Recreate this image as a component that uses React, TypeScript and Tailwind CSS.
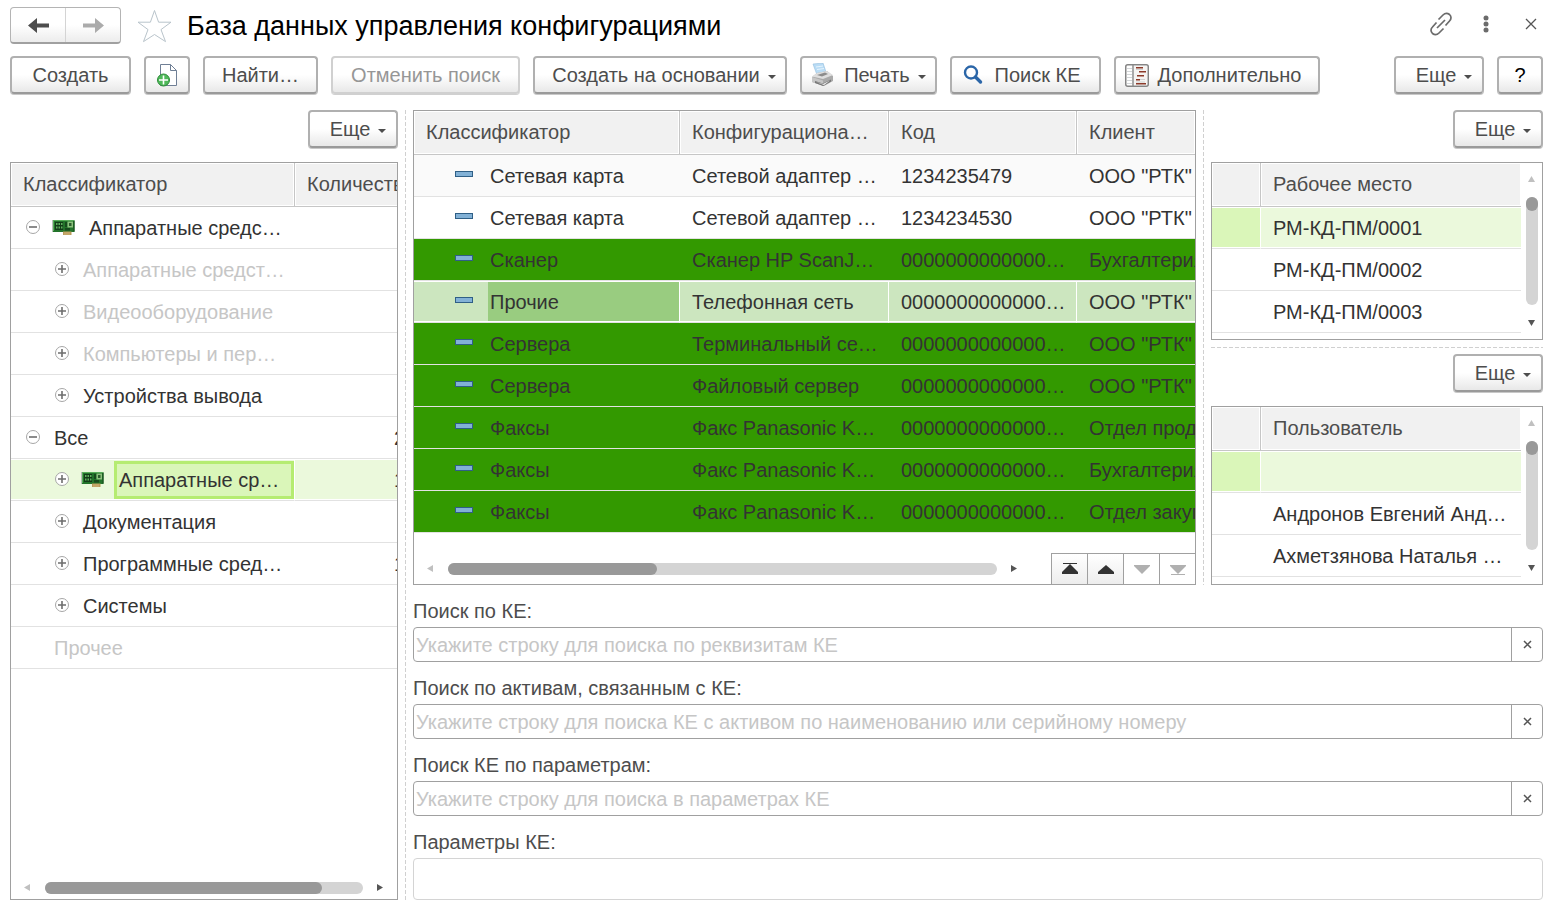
import type { ReactNode } from "react";
import clsx from "clsx";

type TreeRow = {
  title: string;
  level: number;
  state?: "open" | "closed";
  board?: boolean;
  muted?: boolean;
  selected?: boolean;
  count?: string;
};

type Item = {
  kind: string;
  name: string;
  code: string;
  client: string;
  look: "light" | "plain" | "green" | "selected";
};

const treeRows: TreeRow[] = [
  { title: "Аппаратные средс…", level: 0, state: "open", board: true },
  { title: "Аппаратные средст…", level: 1, state: "closed", muted: true },
  { title: "Видеооборудование", level: 1, state: "closed", muted: true },
  { title: "Компьютеры и пер…", level: 1, state: "closed", muted: true },
  { title: "Устройства вывода", level: 1, state: "closed" },
  { title: "Все", level: 0, state: "open", count: "2" },
  {
    title: "Аппаратные ср…",
    level: 1,
    state: "closed",
    board: true,
    selected: true,
    count: "1",
  },
  { title: "Документация", level: 1, state: "closed" },
  { title: "Программные сред…", level: 1, state: "closed", count: "1" },
  { title: "Системы", level: 1, state: "closed" },
  { title: "Прочее", level: 0, muted: true },
];

const zeros = "0000000000000…";

const items: Item[] = [
  { kind: "Сетевая карта", name: "Сетевой адаптер …", code: "1234235479", client: 'ООО "РТК"', look: "light" },
  { kind: "Сетевая карта", name: "Сетевой адаптер …", code: "1234234530", client: 'ООО "РТК"', look: "plain" },
  { kind: "Сканер", name: "Сканер HP ScanJ…", code: zeros, client: "Бухгалтерия", look: "green" },
  { kind: "Прочие", name: "Телефонная сеть", code: zeros, client: 'ООО "РТК"', look: "selected" },
  { kind: "Сервера", name: "Терминальный се…", code: zeros, client: 'ООО "РТК"', look: "green" },
  { kind: "Сервера", name: "Файловый сервер", code: zeros, client: 'ООО "РТК"', look: "green" },
  { kind: "Факсы", name: "Факс Panasonic K…", code: zeros, client: "Отдел продаж", look: "green" },
  { kind: "Факсы", name: "Факс Panasonic K…", code: zeros, client: "Бухгалтерия", look: "green" },
  { kind: "Факсы", name: "Факс Panasonic K…", code: zeros, client: "Отдел закупок", look: "green" },
];

const fields = [
  { id: "ke", label: "Поиск по КЕ:", hint: "Укажите строку для поиска по реквизитам КЕ" },
  {
    id: "assets",
    label: "Поиск по активам, связанным с КЕ:",
    hint: "Укажите строку для поиска КЕ с активом по наименованию или серийному номеру",
  },
  { id: "params", label: "Поиск КЕ по параметрам:", hint: "Укажите строку для поиска в параметрах КЕ" },
];

function Button({
  children,
  className,
  disabled,
  label,
}: {
  children: ReactNode;
  className?: string;
  disabled?: boolean;
  label?: string;
}) {
  return (
    <button
      type="button"
      disabled={disabled}
      aria-label={label}
      className={clsx(
        "flex h-[38px] shrink-0 items-center justify-center whitespace-nowrap rounded-[4px] border-2 bg-linear-to-b from-white from-50% to-[#e8e8e8]",
        disabled
          ? "border-[#d0d0d0] text-[#969696] shadow-[0_1px_0_#d0d0d0]"
          : "border-[#b0b0b0] border-b-[#9a9a9a] text-[#4d4d4d] shadow-[0_1px_0_#c8c8c8]",
        className,
      )}
    >
      {children}
    </button>
  );
}

function Caret() {
  return (
    <svg width="8" height="4" viewBox="0 0 8 4" className="mt-1 ml-2 shrink-0">
      <path d="M0 0h8L4 4z" fill="#4d4d4d" />
    </svg>
  );
}

function MoreButton() {
  return (
    <Button className="w-[90px] pl-[10px]">
      Еще
      <Caret />
    </Button>
  );
}

function Head({ children, className }: { children?: ReactNode; className?: string }) {
  return (
    <th
      className={clsx(
        "h-11 overflow-hidden border-r border-b border-[#c6c6c6] bg-[#f1f1f1] px-3 pb-[2px] text-left font-normal text-[#4d4d4d] shadow-[inset_0_0_0_1px_#fff] last:border-r-0",
        className,
      )}
    >
      {children}
    </th>
  );
}

function Arrow({ dir, dim }: { dir: "left" | "right" | "up" | "down"; dim?: boolean }) {
  const paths = {
    left: "M7 1v7L1 4.5z",
    right: "M1 1v7l6-3.5z",
    up: "M1 7h7L4.5 1z",
    down: "M1 2h7L4.5 8z",
  };
  return (
    <svg width="9" height="9" viewBox="0 0 9 9" className="shrink-0">
      <path d={paths[dir]} fill={dim ? "#c0c0c0" : "#555"} />
    </svg>
  );
}

function Toggle({ open }: { open: boolean }) {
  return (
    <svg width="14" height="14" viewBox="0 0 14 14" className="mb-[2px] shrink-0">
      <circle cx="7" cy="7" r="6.5" fill="#fff" stroke="#a6a6a6" />
      <path d={open ? "M3 7h8" : "M3 7h8M7 3v8"} stroke="#6e6e6e" strokeWidth="1.6" />
    </svg>
  );
}

function BoardIcon() {
  return (
    <svg width="23" height="17" viewBox="0 0 23 17" className="shrink-0">
      <path d="M0 1h1.5v12H0z" fill="#b9bdb9" />
      <path d="M1 1h21.500v12H1z" fill="#22732a" />
      <path d="M1 1h21v1H1zM1 1h1v11H1z" fill="#58ac59" />
      <path d="M11 12.500h8.500V16H11z" fill="#b99a5b" />
      <path d="M13 13v3M15 13v3M17 13v3" stroke="#ddc58a" strokeWidth=".6" />
      <path d="M3 3h8v8H3z" fill="#123c18" />
      <path d="M4 4h1.500v2H4zM6.500 4H8v2H6.500zM9 4h1.500v2H9zM4 7.500h1.500v2H4zM6.500 7.500H8v2H6.500zM9 7.500h1.500v2H9z" fill="#5fae5c" />
      <path d="M13 3h2v5h-2zM13 9h5v2.500h-5z" fill="#174a1d" />
      <path d="M15.500 2.500h5.500v6h-5.500z" fill="#8bc17c" />
      <path d="M17 4h2.500v3H17z" fill="#2c5c2e" />
      <path d="M22 2v10.500" stroke="#174a1d" />
    </svg>
  );
}

function PrinterIcon() {
  return (
    <svg width="23" height="24" viewBox="0 0 23 24" className="shrink-0">
      <path d="M2 1l10-1 3 9-9 3z" fill="#b9dcf5" stroke="#94bedd" strokeWidth=".6" />
      <path d="M5 4l7-1M6 6.500l7-1" stroke="#e6f4fd" />
      <path d="M1 14l5-4 10-2 6 5v5l-9 5-12-4z" fill="#a9a9a9" />
      <path d="M1 13.500l5-3.500 10-2 6 4-10 4z" fill="#dedede" />
      <path d="M6 12l8-2.500 3 1.500-6 2.500z" fill="#8c8c8c" />
      <path d="M1 14l11 3.500v5L1 19z" fill="#c6c6c6" />
      <path d="M4 18l8 2.500 8-4v2l-8 4.500-8-3z" fill="#777" />
      <path d="M5 19l7 2 7-3.500-6 4.500z" fill="#f5f5f5" />
    </svg>
  );
}

function SearchIcon() {
  return (
    <svg width="20" height="20" viewBox="0 0 20 20" className="shrink-0">
      <circle cx="8" cy="7.500" r="6" fill="none" stroke="#2b66a8" strokeWidth="2.400" />
      <path d="M12.500 12l5 5" stroke="#2b66a8" strokeWidth="3.400" strokeLinecap="round" />
    </svg>
  );
}

function ReportIcon() {
  return (
    <svg width="24" height="23" viewBox="0 0 24 23" className="shrink-0">
      <rect x=".75" y=".75" width="22.500" height="21.500" rx="2" fill="#fff" stroke="#858585" strokeWidth="1.500" />
      <path d="M2 4.500h5M2 7.500h5M2 10.500h5M2 13.500h5M2 16.500h5M2 19.500h5" stroke="#d3d6d8" />
      <path d="M8 1v21" stroke="#8d8d8d" strokeWidth="1.500" />
      <path d="M9 2h13v19H9z" fill="#f6f4f2" />
      <path d="M11 5.500h7M13 15.500h7M11 18h9" stroke="#cfd2d2" />
      <path d="M11 3.750h7M14 7.750h7M12 11.750h7M11 15.750h4M11 19.750h10" stroke="#8c3a2a" strokeWidth="1.700" />
    </svg>
  );
}

function AddPageIcon() {
  return (
    <svg width="20" height="24" viewBox="0 0 20 24" className="shrink-0">
      <path d="M3.500 1.500h10l6 6v15h-16z" fill="#fff" stroke="#6f7f95" />
      <path d="M13.500 1.500v6h6" fill="none" stroke="#6f7f95" />
      <circle cx="6.500" cy="17" r="6" fill="#4fb95a" stroke="#2b8a37" />
      <path d="M6.500 12.500v9M2 17h9" stroke="#fff" strokeWidth="1.600" />
    </svg>
  );
}

function NavArrow({ back }: { back?: boolean }) {
  return (
    <svg width="21" height="15" viewBox="0 0 21 15">
      {back ? (
        <path d="M0 7.500L9 0v5.500h12v4H9V15z" fill="#4d4d4d" />
      ) : (
        <path d="M21 7.500L12 0v5.500H0v4h12V15z" fill="#ababab" />
      )}
    </svg>
  );
}

function TitleBar() {
  return (
    <header className="flex h-[37px] items-center">
      <div className="flex h-full w-[111px] rounded-[4px] border border-[#b4b4b4] border-b-2 border-b-[#a0a0a0] bg-linear-to-b from-white from-50% to-[#ececec]">
        <button type="button" aria-label="Назад" className="flex flex-1 items-center justify-center border-r border-[#d4d4d4]">
          <NavArrow back />
        </button>
        <button type="button" aria-label="Вперед" className="flex flex-1 items-center justify-center">
          <NavArrow />
        </button>
      </div>
      <button type="button" aria-label="Избранное" className="ml-4">
        <svg width="35" height="34" viewBox="0 0 35 34" fill="none" stroke="#b9c4cb">
          <path d="M17.500 1.500l4.100 11.700h12.400l-10 7.400 4.500 12L17.500 25.500l-11 7.100 4.500-12-10-7.400h12.400z" />
        </svg>
      </button>
      <h1 className="ml-[15px] text-[27px] leading-8 text-black">База данных управления конфигурациями</h1>
      <div className="ml-auto flex items-center pb-1">
        <button type="button" aria-label="Ссылка">
          <svg width="24" height="24" viewBox="0 0 24 24" fill="none" stroke="#6b6b6b" strokeWidth="1.700">
            <path d="M8 16l8-8" />
            <path d="M9.500 7.500l4.500-4.500c2-2 4.500-2 6.500-.5 2 2 2 4.500 0 6.500l-4 4.500" />
            <path d="M14.500 16.500L10 21c-2 2-4.500 2-6.500.5-2-2-2-4.500 0-6.500l4-4.500" />
          </svg>
        </button>
        <button type="button" aria-label="Меню" className="ml-[30px]">
          <svg width="6" height="18" viewBox="0 0 6 18" fill="#6b6b6b">
            <circle cx="3" cy="3" r="2.500" />
            <circle cx="3" cy="9" r="2.500" />
            <circle cx="3" cy="15" r="2.500" />
          </svg>
        </button>
        <button type="button" aria-label="Закрыть" className="ml-9 mr-[6px]">
          <svg width="12" height="12" viewBox="0 0 12 12" stroke="#555" strokeWidth="1.300">
            <path d="M1 1l10 10M11 1L1 11" />
          </svg>
        </button>
      </div>
    </header>
  );
}

function Toolbar() {
  return (
    <div className="mt-3 flex gap-[13px]">
      <Button className="w-[121px]">Создать</Button>
      <Button className="w-[46px]" label="Скопировать">
        <AddPageIcon />
      </Button>
      <Button className="w-[115px]">Найти…</Button>
      <Button className="w-[189px]" disabled>
        Отменить поиск
      </Button>
      <Button className="w-[254px] pl-2">
        Создать на основании
        <Caret />
      </Button>
      <Button className="w-[137px]">
        <PrinterIcon />
        <span className="ml-[10px]">Печать</span>
        <Caret />
      </Button>
      <Button className="w-[151px] pr-2">
        <SearchIcon />
        <span className="ml-3">Поиск КЕ</span>
      </Button>
      <Button className="w-[206px] pr-2">
        <ReportIcon />
        <span className="ml-[9px]">Дополнительно</span>
      </Button>
      <div className="ml-auto flex gap-[13px]">
        <MoreButton />
        <Button className="w-[46px] text-black">?</Button>
      </div>
    </div>
  );
}

function HScroll({ thumb }: { thumb: string }) {
  return (
    <div className="flex flex-1 items-center">
      <Arrow dir="left" dim />
      <div className="mx-[13px] h-3 flex-1 rounded-full bg-[#d4d4d4]">
        <div className={clsx("h-3 rounded-full bg-[#999]", thumb)} />
      </div>
      <Arrow dir="right" />
    </div>
  );
}

function Tree() {
  return (
    <aside className="flex w-[388px] shrink-0 flex-col">
      <div className="flex justify-end">
        <MoreButton />
      </div>
      <div className="mt-[14px] flex flex-1 flex-col overflow-hidden border border-[#a0a0a0]">
        <table className="w-[412px] table-fixed border-separate border-spacing-0 whitespace-nowrap">
          <thead>
            <tr>
              <Head className="w-[284px]">Классификатор</Head>
              <Head>Количество</Head>
            </tr>
          </thead>
          <tbody>
            {treeRows.map((row, i) => (
              <tr key={i} className={clsx(row.selected && "bg-[#ebf9dc]", row.muted ? "text-[#c6c6c6]" : "text-[#333]")}>
                <td
                  className={clsx(
                    "h-[42px] border-b border-[#e2e2e2] p-0",
                    row.selected && "border-r border-r-white shadow-[inset_0_1px_0_#fff,inset_0_-1px_0_#fff]",
                  )}
                >
                  <div className={clsx("flex h-10 items-center", row.level ? "pl-11" : "pl-[15px]")}>
                    {row.state ? <Toggle open={row.state === "open"} /> : <span className="w-[14px]" />}
                    {row.board && (
                      <span className={clsx("ml-3", row.selected ? "mr-[10px]" : "mr-0")}>
                        <BoardIcon />
                      </span>
                    )}
                    {row.selected ? (
                      <span className="flex h-[38px] flex-1 items-center border-[3px] border-[#b5ec71] bg-[#daf6b9] pl-[2px]">
                        {row.title}
                      </span>
                    ) : (
                      <span className="ml-[14px]">{row.title}</span>
                    )}
                  </div>
                </td>
                <td
                  className={clsx(
                    "border-b border-[#e2e2e2] pr-[18px] text-right",
                    row.selected && "shadow-[inset_0_1px_0_#fff,inset_0_-1px_0_#fff]",
                  )}
                >
                  {row.count}
                </td>
              </tr>
            ))}
          </tbody>
        </table>
        <div className="mt-auto flex h-[23px] px-3">
          <HScroll thumb="w-[87%]" />
        </div>
      </div>
    </aside>
  );
}

const rowLook = {
  light: "bg-[#fafafa]",
  plain: "bg-white",
  green: "bg-[#339900]",
  selected:
    "bg-[#cce6bf] [&>td]:border-r [&>td]:border-r-white [&>td]:shadow-[inset_0_1px_0_#fff,inset_0_-1px_0_#fff] [&>td:last-child]:border-r-0",
};

function PagerButton({ label, path, off }: { label: string; path: string; off?: boolean }) {
  return (
    <button
      type="button"
      aria-label={label}
      disabled={off}
      className={clsx(
        "flex h-[31px] w-9 items-center justify-center border-t border-l border-[#a0a0a0]",
        !off && "bg-linear-to-b from-white to-[#ededed]",
      )}
    >
      <svg width="16" height="12" viewBox="0 0 16 12" fill={off ? "#b0b0b0" : "#333"}>
        <path d={path} />
      </svg>
    </button>
  );
}

function ItemsTable() {
  return (
    <div className="flex min-w-0 flex-1 flex-col overflow-hidden border border-[#a0a0a0]">
      <table className="w-full table-fixed border-separate border-spacing-0 whitespace-nowrap">
        <thead>
          <tr>
            <Head className="w-[266px]">Классификатор</Head>
            <Head className="w-[209px]">Конфигурациона…</Head>
            <Head className="w-[188px]">Код</Head>
            <Head>Клиент</Head>
          </tr>
        </thead>
        <tbody>
          {items.map((item, i) => (
            <tr key={i} className={clsx("text-[#333]", rowLook[item.look])}>
              <td className="h-[42px] border-b border-[#e2e2e2] p-0">
                <div className="flex h-[39px] items-center">
                  <span className="mb-1 ml-[41px] h-[6px] w-[18px] shrink-0 border border-[#2f5f86] bg-[#82b1d6]" />
                  <span
                    className={clsx(
                      "ml-[15px] flex h-full flex-1 items-center pl-[2px]",
                      item.look === "selected" && "bg-[#99cc80]",
                    )}
                  >
                    {item.kind}
                  </span>
                </div>
              </td>
              <td className="overflow-hidden border-b border-[#e2e2e2] pl-3">{item.name}</td>
              <td className="overflow-hidden border-b border-[#e2e2e2] pl-3">{item.code}</td>
              <td className="overflow-hidden border-b border-[#e2e2e2] pl-3 text-clip">{item.client}</td>
            </tr>
          ))}
        </tbody>
      </table>
      <div className="mt-auto flex">
        <div className="flex flex-1 pr-8 pl-3">
          <HScroll thumb="w-[38%]" />
        </div>
        <div className="flex">
          <PagerButton label="В начало" path="M1 0h14v1H1zM8 1l8 8v2H0V9z" />
          <PagerButton label="Вверх" path="M8 2l8 7v2H0V9z" />
          <PagerButton label="Вниз" path="M0 2h16v1L8 11 0 3z" off />
          <PagerButton label="В конец" path="M0 2h16v1L8 11 0 3zM1 11h14v1H1z" off />
        </div>
      </div>
    </div>
  );
}

function SideList({ title, rows, className }: { title: string; rows: string[]; className?: string }) {
  return (
    <div className={clsx("flex flex-col", className)}>
      <div className="flex justify-end">
        <MoreButton />
      </div>
      <div className="mt-[14px] flex min-h-[178px] flex-1 overflow-hidden border border-[#a0a0a0]">
        <table className="h-fit flex-1 table-fixed border-separate border-spacing-0 whitespace-nowrap">
          <thead>
            <tr>
              <Head className="w-[49px]" />
              <Head>{title}</Head>
            </tr>
          </thead>
          <tbody className="text-[#333]">
            {rows.map((row, i) => (
              <tr key={i} className={clsx(i === 0 && "[&>td]:shadow-[inset_0_1px_0_#fff,inset_0_-1px_0_#fff]")}>
                <td
                  className={clsx(
                    "h-[42px] border-b border-[#e2e2e2]",
                    i === 0 && "border-r border-r-white bg-[#daf6b9]",
                  )}
                />
                <td className={clsx("border-b border-[#e2e2e2] pl-3", i === 0 && "bg-[#ebf9dc]")}>{row}</td>
              </tr>
            ))}
          </tbody>
        </table>
        <div className="flex w-[21px] flex-col items-center pt-3 pb-3">
          <Arrow dir="up" dim />
          <div className="my-[13px] w-3 flex-1 rounded-full bg-[#d4d4d4]">
            <div className="h-[14px] rounded-full bg-[#999]" />
          </div>
          <Arrow dir="down" />
        </div>
      </div>
    </div>
  );
}

function VSplit() {
  return <div className="mx-[7px] w-px shrink-0 bg-[repeating-linear-gradient(to_bottom,#d0d0d0_0_4px,transparent_4px_6px)]" />;
}

function SearchForm() {
  return (
    <form className="text-[#4d4d4d]">
      {fields.map((field) => (
        <div key={field.id} className="mt-[14px]">
          <label htmlFor={field.id} className="block leading-6">
            {field.label}
          </label>
          <div className="mt-1 flex h-[35px] rounded-[4px] border border-[#a0a0a0]">
            <input
              id={field.id}
              type="text"
              placeholder={field.hint}
              className="min-w-0 flex-1 pl-[2px] placeholder:text-[#c6c6c6] focus:outline-none"
            />
            <button
              type="button"
              aria-label="Очистить"
              className="flex w-[31px] items-center justify-center border-l border-[#a0a0a0]"
            >
              <svg width="9" height="9" viewBox="0 0 9 9" stroke="#555" strokeWidth="1.500">
                <path d="M1 1l7 7M8 1L1 8" />
              </svg>
            </button>
          </div>
        </div>
      ))}
      <label htmlFor="values" className="mt-[14px] block leading-6">
        Параметры КЕ:
      </label>
      <input
        id="values"
        type="text"
        readOnly
        className="mt-1 block h-[42px] w-full rounded-[4px] border border-[#d4d4d4] focus:outline-none"
      />
    </form>
  );
}

export default function App() {
  return (
    <div className="bg-white pt-[7px] pr-[19px] pb-[14px] pl-[10px] font-['Liberation_Sans',Arial,sans-serif] text-[20px] leading-6">
      <TitleBar />
      <Toolbar />
      <main className="mt-4 flex">
        <Tree />
        <VSplit />
        <div className="flex min-w-0 flex-1 flex-col">
          <div className="flex h-[475px]">
            <ItemsTable />
            <VSplit />
            <div className="flex w-[332px] shrink-0 flex-col">
              <SideList title="Рабочее место" rows={["РМ-КД-ПМ/0001", "РМ-КД-ПМ/0002", "РМ-КД-ПМ/0003"]} />
              <div className="mt-[7px] mb-[6px] h-px shrink-0 bg-[repeating-linear-gradient(to_right,#d0d0d0_0_4px,transparent_4px_6px)]" />
              <SideList
                title="Пользователь"
                rows={["", "Андронов Евгений Анд…", "Ахметзянова Наталья …"]}
                className="flex-1"
              />
            </div>
          </div>
          <SearchForm />
        </div>
      </main>
    </div>
  );
}
